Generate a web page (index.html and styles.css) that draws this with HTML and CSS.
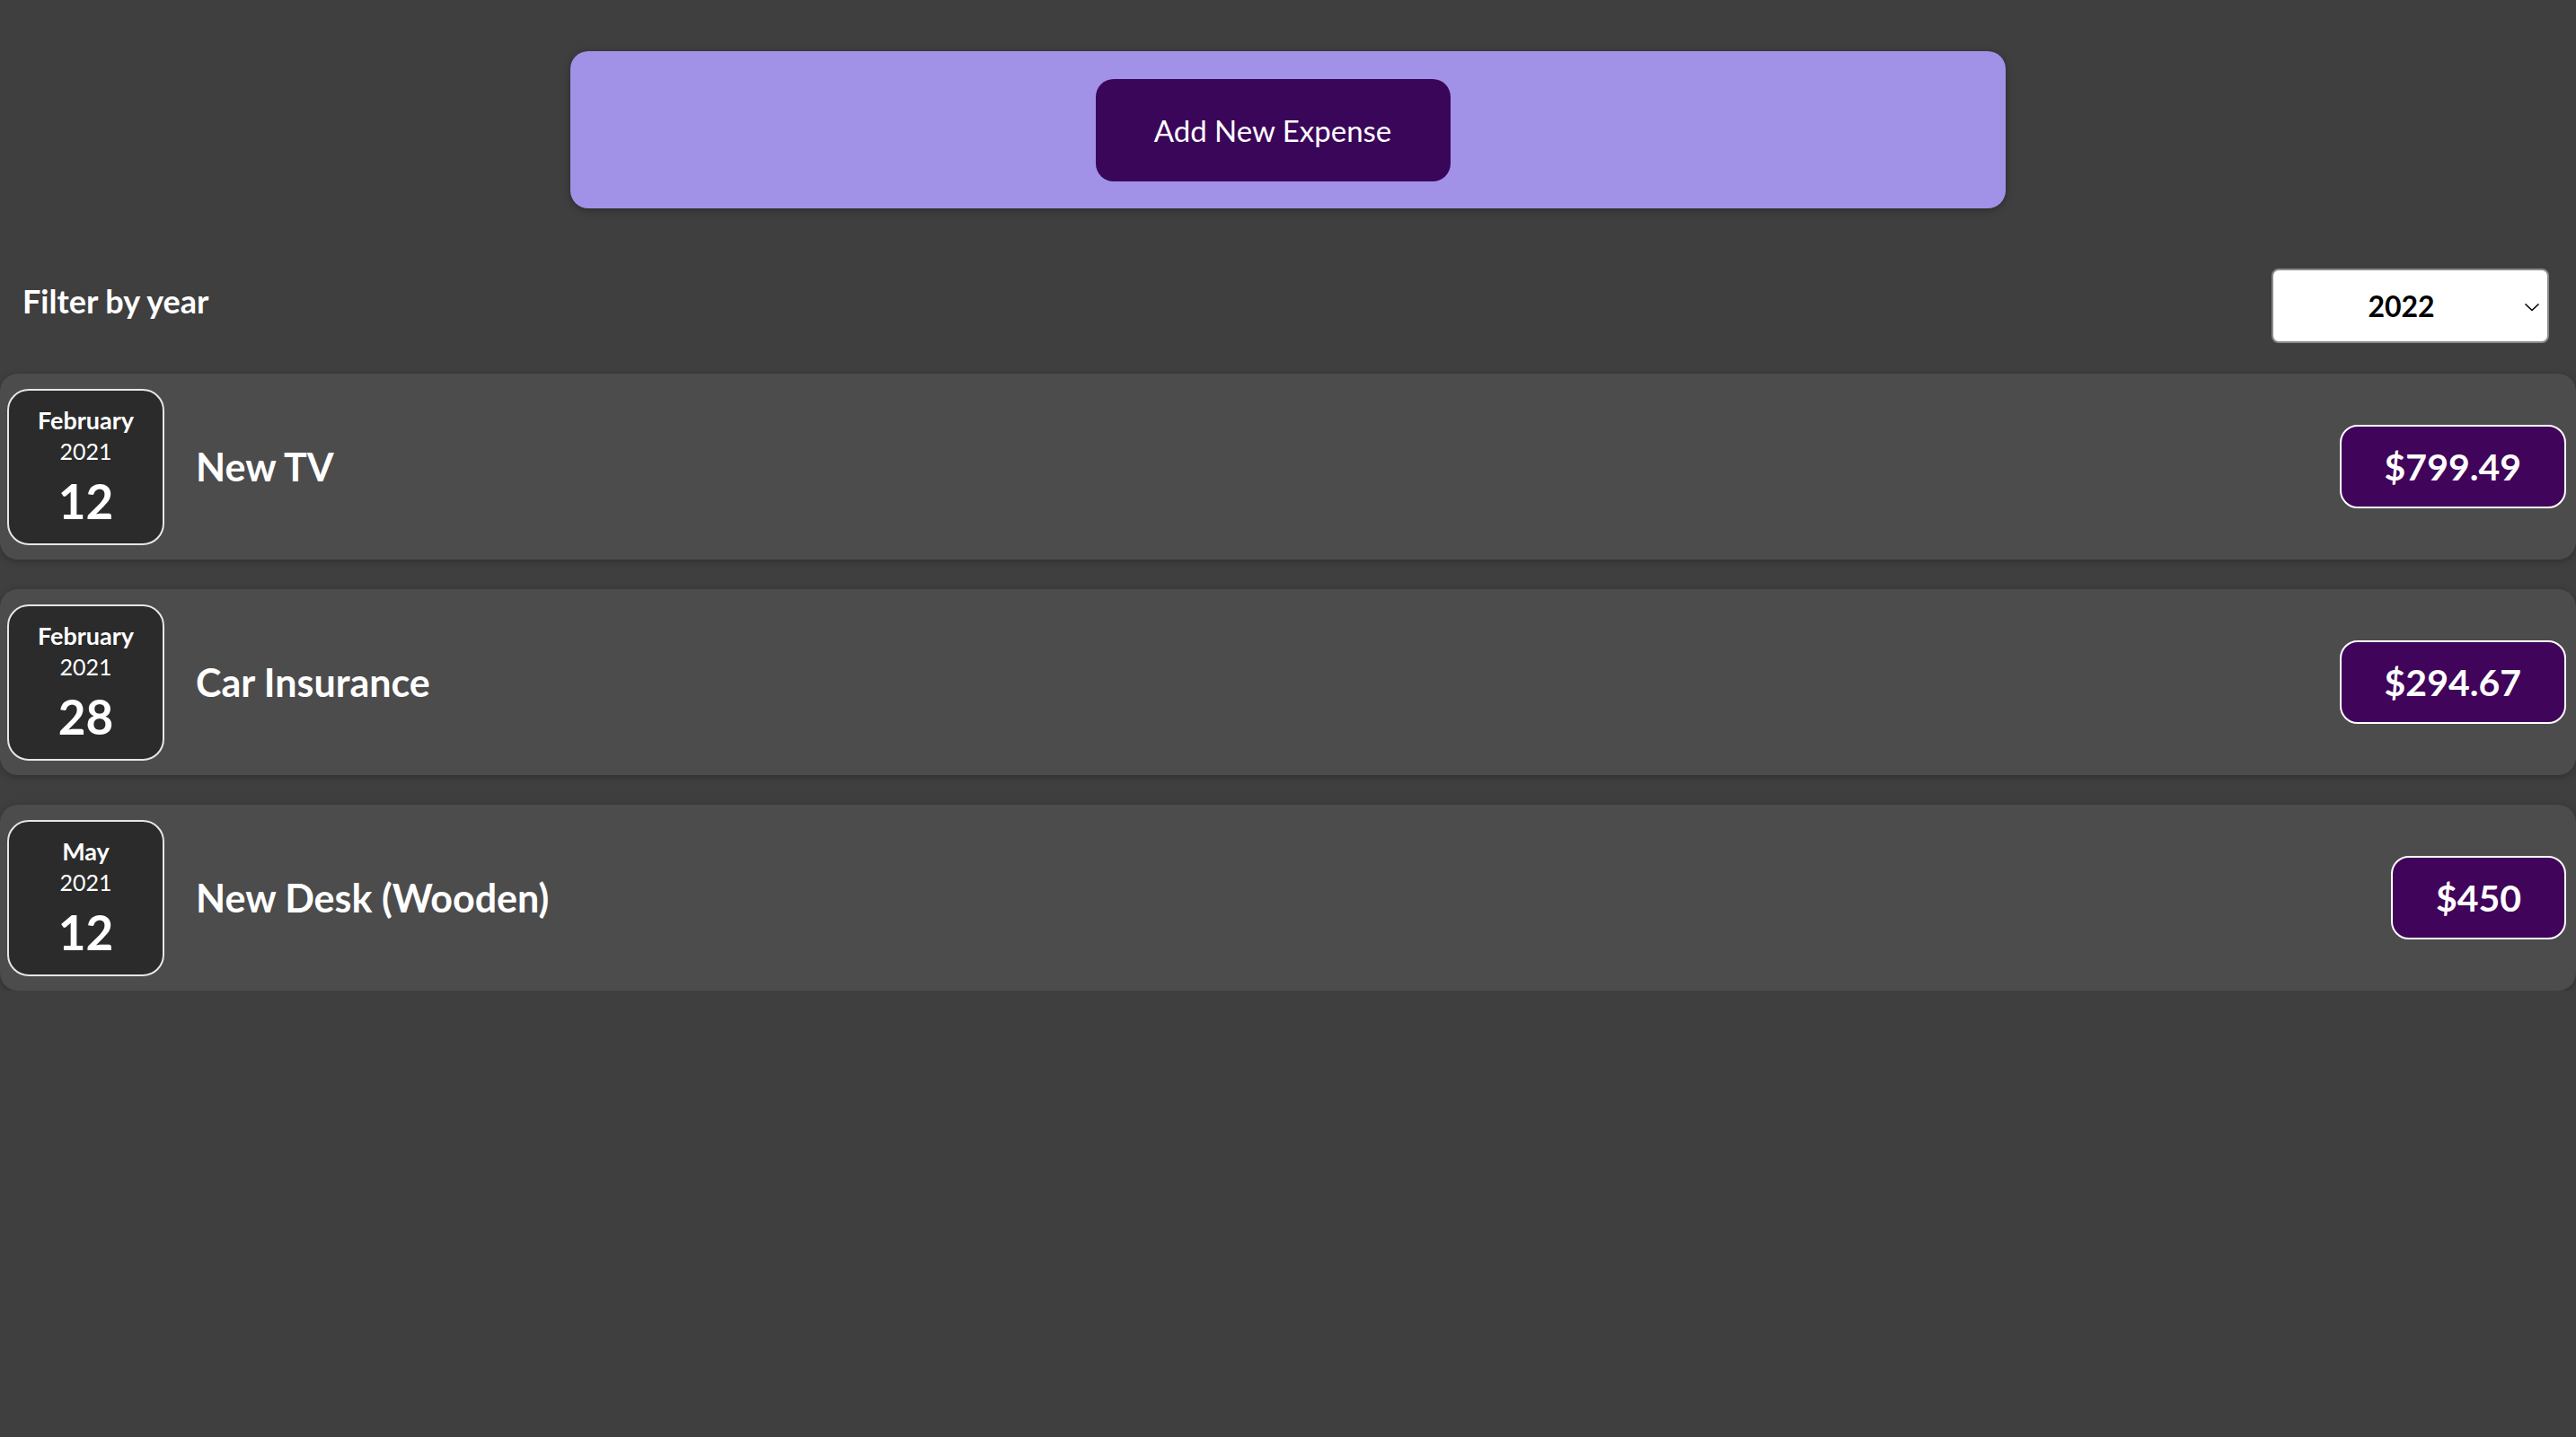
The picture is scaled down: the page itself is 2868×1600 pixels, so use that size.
FILE: index.html
```html
<!DOCTYPE html>
<html lang="en">
<head>
<meta charset="utf-8">
<title>Expenses</title>
<link rel="stylesheet" href="styles.css">
</head>
<body>
<div class="app">
  <div class="new-expense">
    <button class="add-btn">Add New Expense</button>
  </div>
  <div class="filter">
    <label class="filter-label">Filter by year</label>
    <div class="select">
      <span class="select-value">2022</span>
      <svg class="chevron" width="18" height="10" viewBox="0 0 18 10"><path d="M1.5 1.5 L9 8.5 L16.5 1.5" fill="none" stroke="#000" stroke-width="1.6"/></svg>
    </div>
  </div>
  <ul class="list">
    <li class="item">
      <div class="date">
        <div class="month">February</div>
        <div class="year">2021</div>
        <div class="day">12</div>
      </div>
      <h2 class="title">New TV</h2>
      <div class="price">$799.49</div>
    </li>
    <li class="item">
      <div class="date">
        <div class="month">February</div>
        <div class="year">2021</div>
        <div class="day">28</div>
      </div>
      <h2 class="title">Car Insurance</h2>
      <div class="price">$294.67</div>
    </li>
    <li class="item">
      <div class="date">
        <div class="month">May</div>
        <div class="year">2021</div>
        <div class="day">12</div>
      </div>
      <h2 class="title">New Desk (Wooden)</h2>
      <div class="price">$450</div>
    </li>
  </ul>
</div>
</body>
</html>
```
FILE: styles.css
```css
* { box-sizing: border-box; }
html, body {
  margin: 0;
  padding: 0;
  background: #3f3f3f;
  font-family: "Lato", "Noto Sans", sans-serif;
  color: #fff;
}
.app {
  padding-top: 57px;
}
.new-expense {
  width: 1598px;
  margin: 0 auto;
  padding: 31px 0 30px;
  background: #a192e8;
  border-radius: 20px;
  display: flex;
  justify-content: center;
  box-shadow: 0 2px 10px rgba(0,0,0,0.3);
}
.add-btn {
  width: 395px;
  height: 114px;
  margin-right: 34px;
  border: none;
  border-radius: 20px;
  background: #3a0659;
  color: #fff;
  font-family: inherit;
  font-size: 33px;
  font-weight: 400;
}
.filter {
  display: flex;
  justify-content: space-between;
  align-items: center;
  padding: 0 30px 0 25px;
  margin-top: 67px;
}
.filter-label {
  font-size: 36px;
  font-weight: 700;
  margin-top: -12px;
}
.select {
  width: 309px;
  height: 83px;
  background: #fff;
  border: 2px solid #8a8a8a;
  border-radius: 8px;
  display: flex;
  align-items: center;
  justify-content: center;
  position: relative;
  color: #000;
}
.select-value {
  font-size: 32px;
  font-weight: 700;
  margin-left: -20px;
}
.chevron {
  position: absolute;
  right: 8px;
  top: 36px;
}
.list {
  list-style: none;
  margin: 34px 0 0;
  padding: 0;
  display: flex;
  flex-direction: column;
  gap: 33px;
}
.item {
  display: flex;
  align-items: center;
  height: 207px;
  padding: 0 11px 0 8px;
  background: #4c4c4c;
  border-radius: 20px;
  box-shadow: 0 2px 8px rgba(0,0,0,0.25);
}
.date {
  width: 175px;
  height: 174px;
  flex: none;
  padding-top: 6px;
  background: #2b2b2b;
  border: 2px solid #e6e6e6;
  border-radius: 24px;
  display: flex;
  flex-direction: column;
  align-items: center;
  justify-content: center;
}
.month {
  font-size: 27px;
  font-weight: 700;
  line-height: 35px;
}
.year {
  font-size: 25px;
  font-weight: 400;
  line-height: 35px;
}
.day {
  font-size: 53px;
  font-weight: 700;
  line-height: 75px;
}
.title {
  flex: 1;
  margin: 0 0 0 35px;
  font-size: 43px;
  font-weight: 700;
}
.price {
  height: 93px;
  padding: 0 48px;
  display: flex;
  align-items: center;
  background: #40045a;
  border: 2px solid #fff;
  border-radius: 20px;
  font-size: 41px;
  font-weight: 700;
}
```
